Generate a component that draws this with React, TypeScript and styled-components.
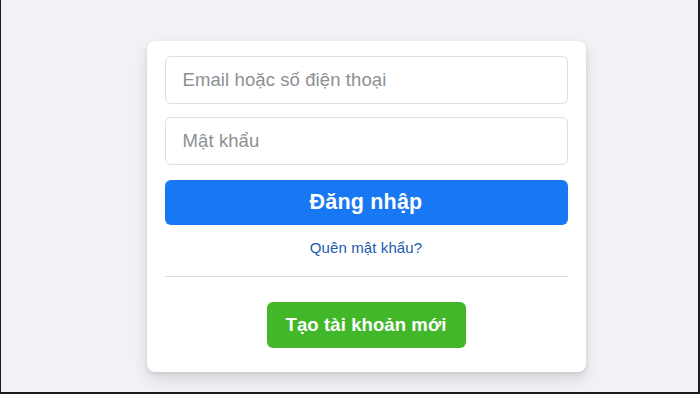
import React from 'react';
import styled, { createGlobalStyle } from 'styled-components';

const GlobalStyle = createGlobalStyle`
  html, body {
    margin: 0;
    padding: 0;
  }
  body {
    width: 700px;
    height: 394px;
    box-sizing: border-box;
    background: #f0f2f5;
    border-left: 1px solid #1c1c1c;
    border-right: 2px solid #1c1c1c;
    border-bottom: 2px solid #1c1c1c;
    font-family: 'Liberation Sans', Arial, sans-serif;
    overflow: hidden;
  }
`;

const Page = styled.div`
  display: flex;
  justify-content: center;
  padding-top: 41px;
  padding-left: 33px;
`;

const Card = styled.form`
  width: 439px;
  box-sizing: border-box;
  background: #ffffff;
  border-radius: 8px;
  box-shadow: 0 2px 4px rgba(0, 0, 0, 0.1), 0 8px 16px rgba(0, 0, 0, 0.1);
  padding: 15px 18px 24px;
  display: flex;
  flex-direction: column;
  align-items: stretch;
`;

const Input = styled.input`
  height: 48px;
  box-sizing: border-box;
  border: 1px solid #dddfe2;
  border-radius: 6px;
  padding: 0 17px;
  font-family: 'Liberation Sans', Arial, sans-serif;
  font-size: 18.5px;
  letter-spacing: 0.1px;
  color: #1d2129;
  margin-bottom: 13px;
  outline: none;

  &::placeholder {
    color: #8d8f93;
  }
`;

const LoginButton = styled.button`
  height: 45px;
  margin-top: 2px;
  border: none;
  border-radius: 6px;
  background: #1877f2;
  color: #ffffff;
  font-family: 'Liberation Sans', Arial, sans-serif;
  font-size: 21.5px;
  font-weight: 700;
  letter-spacing: 0.2px;
`;

const Forgot = styled.a`
  align-self: center;
  margin-top: 14px;
  color: #1a5bb0;
  font-size: 15px;
  letter-spacing: 0.1px;
  text-decoration: none;
`;

const Divider = styled.hr`
  width: 100%;
  border: none;
  border-top: 1px solid #dadde1;
  margin: 20px 0 25px;
`;

const CreateButton = styled.button`
  align-self: center;
  width: 199px;
  height: 46px;
  border: none;
  border-radius: 6px;
  background: #42b72a;
  color: #ffffff;
  font-family: 'Liberation Sans', Arial, sans-serif;
  font-size: 18.5px;
  font-weight: 700;
  letter-spacing: 0.1px;
`;

export default function App() {
  return (
    <>
      <GlobalStyle />
      <Page>
        <Card onSubmit={(e) => e.preventDefault()}>
          <Input type="text" placeholder="Email hoặc số điện thoại" />
          <Input type="password" placeholder="Mật khẩu" />
          <LoginButton type="submit">Đăng nhập</LoginButton>
          <Forgot href="#">Quên mật khẩu?</Forgot>
          <Divider />
          <CreateButton type="button">Tạo tài khoản mới</CreateButton>
        </Card>
      </Page>
    </>
  );
}
